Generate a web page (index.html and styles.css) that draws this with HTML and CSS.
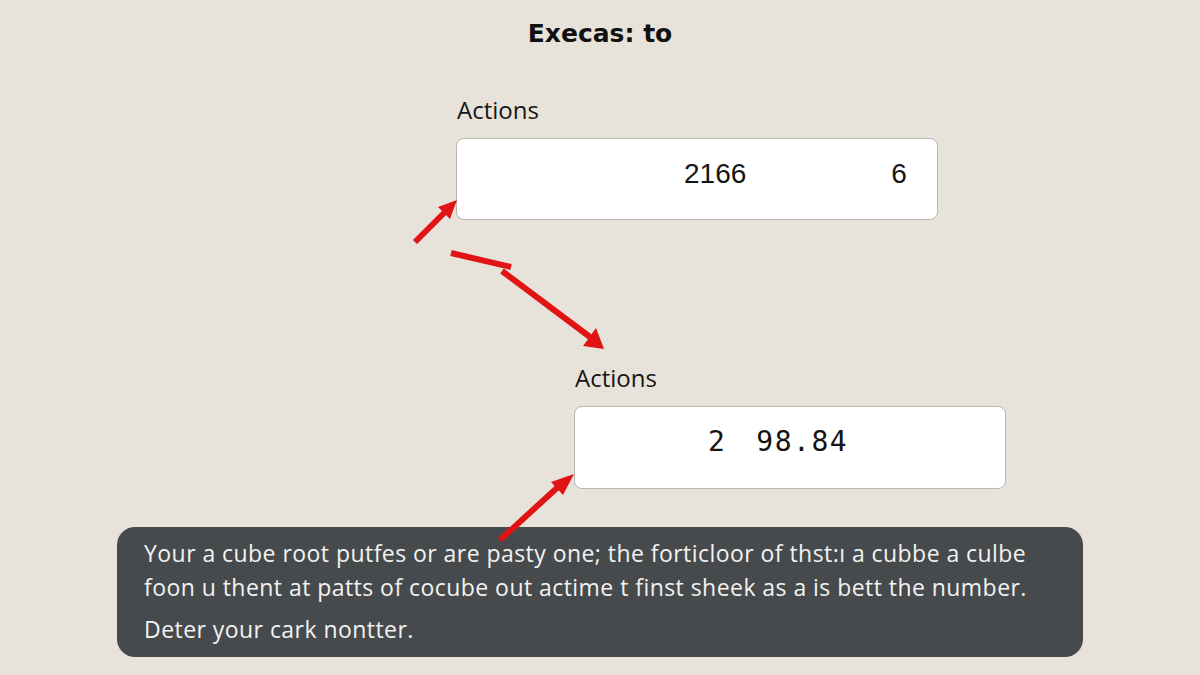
FILE: index.html
```html
<!DOCTYPE html>
<html lang="en">
<head>
    <meta charset="UTF-8">
    <meta name="viewport" content="width=device-width, initial-scale=1.0">
    <title>Execas</title>
    <link rel="stylesheet" href="styles.css">
</head>
<body>
    <h1 class="title">Execas: to</h1>

    <div class="field field-one">
        <p class="label">Actions</p>
        <div class="box box-one">
            <span class="num">2166</span>
            <span class="num num-right">6</span>
        </div>
    </div>

    <div class="field field-two">
        <p class="label">Actions</p>
        <div class="box box-two">
            <span class="mono">2</span>
            <span class="mono">98.84</span>
        </div>
    </div>

    <div class="panel">
        <p>Your a cube root putfes or are pasty one; the forticloor of thst:ı a cubbe a culbe<br>foon u thent at patts of cocube out actime t finst sheek as a is bett the number.</p>
        <p class="last">Deter your cark nontter.</p>
    </div>

    <!-- red annotation arrows drawn over the page -->
    <svg class="arrows" width="1200" height="675" viewBox="0 0 1200 675">
        <g stroke="#e01414" stroke-width="6" stroke-linecap="butt" fill="none">
            <line x1="415" y1="242" x2="446" y2="211"/>
            <line x1="451" y1="253" x2="511" y2="267"/>
            <line x1="502" y1="271" x2="590" y2="337"/>
            <line x1="500" y1="540" x2="558" y2="487"/>
        </g>
        <g fill="#e01414">
            <polygon points="457,200 438,207 450,219"/>
            <polygon points="604,349 583,346 596,328"/>
            <polygon points="574,474 551,482 563,495"/>
        </g>
    </svg>
</body>
</html>
```

FILE: styles.css
```css
* {
    margin: 0;
    padding: 0;
    box-sizing: border-box;
}

body {
    width: 1200px;
    height: 675px;
    background-color: #e8e3da;
    color: #141414;
    font-family: "Open Sans", Arial, sans-serif;
    position: relative;
    overflow: hidden;
}

.title {
    font-family: "DejaVu Sans", sans-serif;
    font-weight: bold;
    font-size: 25px;
    line-height: 30px;
    text-align: center;
    padding-top: 19px;
    color: #111;
}

.label {
    font-size: 24px;
    line-height: 28px;
    color: #161616;
    padding-left: 1px;
}

.field-one {
    margin-top: 47px;
    margin-left: 456px;
}

.field-two {
    margin-top: 144px;
    margin-left: 574px;
}

.box {
    margin-top: 14px;
    background: #fff;
    border: 1px solid #b9b6b1;
    border-radius: 8px;
    display: flex;
    align-items: center;
}

.box-one {
    width: 482px;
    height: 82px;
    padding-left: 227px;
    padding-bottom: 10px;
}

.box-two {
    width: 432px;
    height: 83px;
    padding-left: 133px;
    padding-bottom: 12px;
    gap: 30px;
}

.num {
    font-family: "Liberation Sans", Arial, sans-serif;
    font-size: 28px;
}

.num-right {
    margin-left: 145px;
}

.mono {
    font-family: "DejaVu Sans Mono", monospace;
    font-size: 28px;
    letter-spacing: 1.5px;
}

.panel {
    margin: 38px 117px 0;
    height: 130px;
    background: #474a4c;
    border-radius: 18px;
    padding: 9px 20px 0 27px;
    color: #f2f2f2;
    font-size: 23px;
    letter-spacing: 0.45px;
    line-height: 34px;
    white-space: nowrap;
}

.panel .last {
    margin-top: 8px;
}

.arrows {
    position: absolute;
    left: 0;
    top: 0;
}
```
